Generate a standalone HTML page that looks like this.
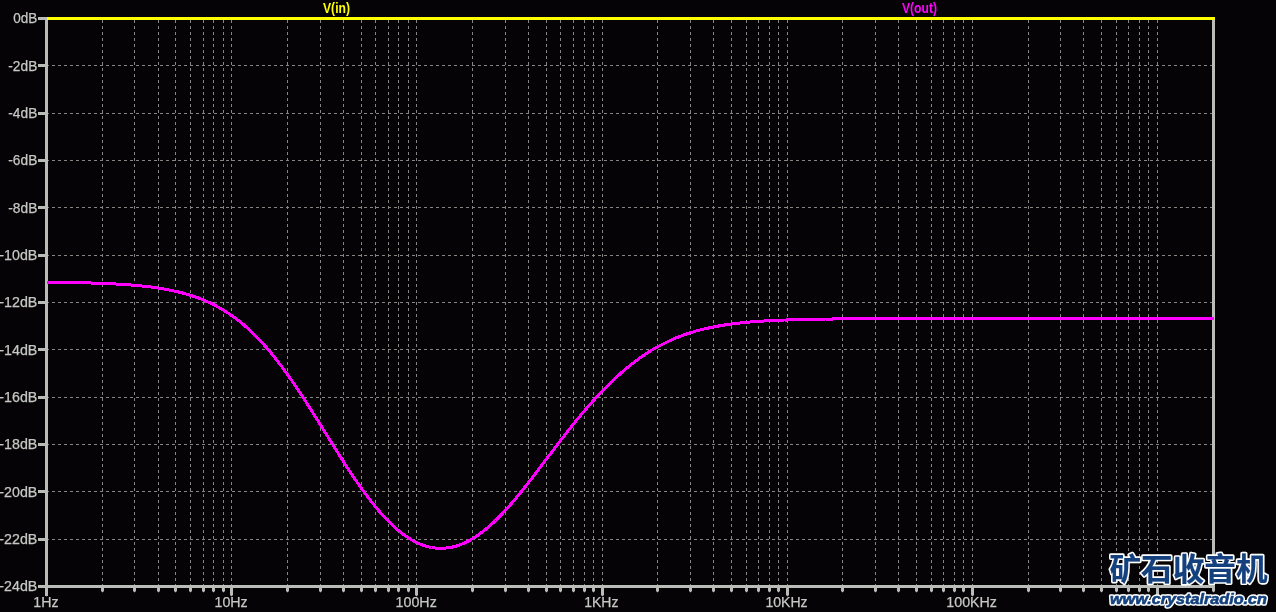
<!DOCTYPE html>
<html lang="zh"><head><meta charset="utf-8"><title>V(in) V(out)</title>
<style>html,body{margin:0;padding:0;background:#050305;overflow:hidden}svg{display:block;will-change:transform}</style></head>
<body>
<svg width="1276" height="612" viewBox="0 0 1276 612">
<rect width="1276" height="612" fill="#050305"/>
<g stroke="#848682" stroke-width="1" stroke-dasharray="3 3" shape-rendering="crispEdges" fill="none">
<path d="M102.5 20.0V585.5"/>
<path d="M134.5 20.0V585.5"/>
<path d="M158.5 20.0V585.5"/>
<path d="M175.5 20.0V585.5"/>
<path d="M190.5 20.0V585.5"/>
<path d="M203.5 20.0V585.5"/>
<path d="M213.5 20.0V585.5"/>
<path d="M223.5 20.0V585.5"/>
<path d="M231.5 20.0V585.5"/>
<path d="M287.5 20.0V585.5"/>
<path d="M320.5 20.0V585.5"/>
<path d="M343.5 20.0V585.5"/>
<path d="M361.5 20.0V585.5"/>
<path d="M375.5 20.0V585.5"/>
<path d="M388.5 20.0V585.5"/>
<path d="M398.5 20.0V585.5"/>
<path d="M408.5 20.0V585.5"/>
<path d="M416.5 20.0V585.5"/>
<path d="M472.5 20.0V585.5"/>
<path d="M505.5 20.0V585.5"/>
<path d="M528.5 20.0V585.5"/>
<path d="M546.5 20.0V585.5"/>
<path d="M560.5 20.0V585.5"/>
<path d="M573.5 20.0V585.5"/>
<path d="M584.5 20.0V585.5"/>
<path d="M593.5 20.0V585.5"/>
<path d="M602.5 20.0V585.5"/>
<path d="M657.5 20.0V585.5"/>
<path d="M690.5 20.0V585.5"/>
<path d="M713.5 20.0V585.5"/>
<path d="M731.5 20.0V585.5"/>
<path d="M746.5 20.0V585.5"/>
<path d="M758.5 20.0V585.5"/>
<path d="M769.5 20.0V585.5"/>
<path d="M778.5 20.0V585.5"/>
<path d="M787.5 20.0V585.5"/>
<path d="M842.5 20.0V585.5"/>
<path d="M875.5 20.0V585.5"/>
<path d="M898.5 20.0V585.5"/>
<path d="M916.5 20.0V585.5"/>
<path d="M931.5 20.0V585.5"/>
<path d="M943.5 20.0V585.5"/>
<path d="M954.5 20.0V585.5"/>
<path d="M963.5 20.0V585.5"/>
<path d="M972.5 20.0V585.5"/>
<path d="M1028.5 20.0V585.5"/>
<path d="M1060.5 20.0V585.5"/>
<path d="M1083.5 20.0V585.5"/>
<path d="M1101.5 20.0V585.5"/>
<path d="M1116.5 20.0V585.5"/>
<path d="M1128.5 20.0V585.5"/>
<path d="M1139.5 20.0V585.5"/>
<path d="M1148.5 20.0V585.5"/>
<path d="M1157.5 20.0V585.5"/>
<path d="M46 65.5H1212.5"/>
<path d="M46 113.5H1212.5"/>
<path d="M46 160.5H1212.5"/>
<path d="M46 207.5H1212.5"/>
<path d="M46 255.5H1212.5"/>
<path d="M46 302.5H1212.5"/>
<path d="M46 349.5H1212.5"/>
<path d="M46 397.5H1212.5"/>
<path d="M46 444.5H1212.5"/>
<path d="M46 491.5H1212.5"/>
<path d="M46 539.5H1212.5"/>
</g>
<g fill="#babcb8" shape-rendering="crispEdges">
<rect x="45" y="17" width="3" height="579"/>
<rect x="45" y="585" width="1170" height="3"/>
<rect x="1212" y="17" width="3" height="571"/>
<rect x="45" y="17" width="1170" height="3"/>
<rect x="38" y="17" width="8" height="3"/>
<rect x="38" y="64" width="8" height="3"/>
<rect x="38" y="112" width="8" height="3"/>
<rect x="38" y="159" width="8" height="3"/>
<rect x="38" y="206" width="8" height="3"/>
<rect x="38" y="254" width="8" height="3"/>
<rect x="38" y="301" width="8" height="3"/>
<rect x="38" y="348" width="8" height="3"/>
<rect x="38" y="396" width="8" height="3"/>
<rect x="38" y="443" width="8" height="3"/>
<rect x="38" y="490" width="8" height="3"/>
<rect x="38" y="538" width="8" height="3"/>
<rect x="38" y="585" width="8" height="3"/>
</g>
<g fill="#babcb8">
<path d="M101.0 587V591L102.5 592.5L104.0 591V587Z"/>
<path d="M133.0 587V591L134.5 592.5L136.0 591V587Z"/>
<path d="M157.0 587V591L158.5 592.5L160.0 591V587Z"/>
<path d="M174.0 587V591L175.5 592.5L177.0 591V587Z"/>
<path d="M189.0 587V591L190.5 592.5L192.0 591V587Z"/>
<path d="M202.0 587V591L203.5 592.5L205.0 591V587Z"/>
<path d="M212.0 587V591L213.5 592.5L215.0 591V587Z"/>
<path d="M222.0 587V591L223.5 592.5L225.0 591V587Z"/>
<path d="M230.0 587V595L231.5 596.5L233.0 595V587Z"/>
<path d="M286.0 587V591L287.5 592.5L289.0 591V587Z"/>
<path d="M319.0 587V591L320.5 592.5L322.0 591V587Z"/>
<path d="M342.0 587V591L343.5 592.5L345.0 591V587Z"/>
<path d="M360.0 587V591L361.5 592.5L363.0 591V587Z"/>
<path d="M374.0 587V591L375.5 592.5L377.0 591V587Z"/>
<path d="M387.0 587V591L388.5 592.5L390.0 591V587Z"/>
<path d="M397.0 587V591L398.5 592.5L400.0 591V587Z"/>
<path d="M407.0 587V591L408.5 592.5L410.0 591V587Z"/>
<path d="M415.0 587V595L416.5 596.5L418.0 595V587Z"/>
<path d="M471.0 587V591L472.5 592.5L474.0 591V587Z"/>
<path d="M504.0 587V591L505.5 592.5L507.0 591V587Z"/>
<path d="M527.0 587V591L528.5 592.5L530.0 591V587Z"/>
<path d="M545.0 587V591L546.5 592.5L548.0 591V587Z"/>
<path d="M559.0 587V591L560.5 592.5L562.0 591V587Z"/>
<path d="M572.0 587V591L573.5 592.5L575.0 591V587Z"/>
<path d="M583.0 587V591L584.5 592.5L586.0 591V587Z"/>
<path d="M592.0 587V591L593.5 592.5L595.0 591V587Z"/>
<path d="M601.0 587V595L602.5 596.5L604.0 595V587Z"/>
<path d="M656.0 587V591L657.5 592.5L659.0 591V587Z"/>
<path d="M689.0 587V591L690.5 592.5L692.0 591V587Z"/>
<path d="M712.0 587V591L713.5 592.5L715.0 591V587Z"/>
<path d="M730.0 587V591L731.5 592.5L733.0 591V587Z"/>
<path d="M745.0 587V591L746.5 592.5L748.0 591V587Z"/>
<path d="M757.0 587V591L758.5 592.5L760.0 591V587Z"/>
<path d="M768.0 587V591L769.5 592.5L771.0 591V587Z"/>
<path d="M777.0 587V591L778.5 592.5L780.0 591V587Z"/>
<path d="M786.0 587V595L787.5 596.5L789.0 595V587Z"/>
<path d="M841.0 587V591L842.5 592.5L844.0 591V587Z"/>
<path d="M874.0 587V591L875.5 592.5L877.0 591V587Z"/>
<path d="M897.0 587V591L898.5 592.5L900.0 591V587Z"/>
<path d="M915.0 587V591L916.5 592.5L918.0 591V587Z"/>
<path d="M930.0 587V591L931.5 592.5L933.0 591V587Z"/>
<path d="M942.0 587V591L943.5 592.5L945.0 591V587Z"/>
<path d="M953.0 587V591L954.5 592.5L956.0 591V587Z"/>
<path d="M962.0 587V591L963.5 592.5L965.0 591V587Z"/>
<path d="M971.0 587V595L972.5 596.5L974.0 595V587Z"/>
<path d="M1027.0 587V591L1028.5 592.5L1030.0 591V587Z"/>
<path d="M1059.0 587V591L1060.5 592.5L1062.0 591V587Z"/>
<path d="M1082.0 587V591L1083.5 592.5L1085.0 591V587Z"/>
<path d="M1100.0 587V591L1101.5 592.5L1103.0 591V587Z"/>
<path d="M1115.0 587V591L1116.5 592.5L1118.0 591V587Z"/>
<path d="M1127.0 587V591L1128.5 592.5L1130.0 591V587Z"/>
<path d="M1138.0 587V591L1139.5 592.5L1141.0 591V587Z"/>
<path d="M1147.0 587V591L1148.5 592.5L1150.0 591V587Z"/>
<path d="M1156.0 587V595L1157.5 596.5L1159.0 595V587Z"/>
<path d="M1212.0 587V591L1213.5 592.5L1215.0 591V587Z"/>
<path d="M45 595L46.5 596.5L48 595Z"/>
</g>
<g font-family="Liberation Sans, Arial, sans-serif" font-size="14.5" fill="#c6c8c4" stroke="#c6c8c4" stroke-width="0.25">
<text x="13.3" y="23.4" textLength="24" lengthAdjust="spacingAndGlyphs">0dB</text>
<text x="8.3" y="70.7" textLength="29" lengthAdjust="spacingAndGlyphs">-2dB</text>
<text x="8.3" y="118.1" textLength="29" lengthAdjust="spacingAndGlyphs">-4dB</text>
<text x="8.3" y="165.4" textLength="29" lengthAdjust="spacingAndGlyphs">-6dB</text>
<text x="8.3" y="212.7" textLength="29" lengthAdjust="spacingAndGlyphs">-8dB</text>
<text x="-0.7" y="260.1" textLength="38" lengthAdjust="spacingAndGlyphs">-10dB</text>
<text x="-0.7" y="307.4" textLength="38" lengthAdjust="spacingAndGlyphs">-12dB</text>
<text x="-0.7" y="354.7" textLength="38" lengthAdjust="spacingAndGlyphs">-14dB</text>
<text x="-0.7" y="402.1" textLength="38" lengthAdjust="spacingAndGlyphs">-16dB</text>
<text x="-0.7" y="449.4" textLength="38" lengthAdjust="spacingAndGlyphs">-18dB</text>
<text x="-0.7" y="496.7" textLength="38" lengthAdjust="spacingAndGlyphs">-20dB</text>
<text x="-0.7" y="544.1" textLength="38" lengthAdjust="spacingAndGlyphs">-22dB</text>
<text x="-0.7" y="591.4" textLength="38" lengthAdjust="spacingAndGlyphs">-24dB</text>
<text x="33.3" y="607" textLength="25.2" lengthAdjust="spacingAndGlyphs">1Hz</text>
<text x="214.5" y="607" textLength="33.2" lengthAdjust="spacingAndGlyphs">10Hz</text>
<text x="395.6" y="607" textLength="41.2" lengthAdjust="spacingAndGlyphs">100Hz</text>
<text x="584.2" y="607" textLength="34.2" lengthAdjust="spacingAndGlyphs">1KHz</text>
<text x="765.4" y="607" textLength="42.2" lengthAdjust="spacingAndGlyphs">10KHz</text>
<text x="946.3" y="607" textLength="50.7" lengthAdjust="spacingAndGlyphs">100KHz</text>
</g>
<path d="M47 18.5H1215" stroke="#ffff00" stroke-width="3" fill="none" shape-rendering="crispEdges"/>
<polyline points="46.5,282.2 47.5,282.2 48.5,282.2 49.5,282.2 50.5,282.2 51.5,282.2 52.5,282.2 53.5,282.2 54.5,282.2 55.5,282.3 56.5,282.3 57.5,282.3 58.5,282.3 59.5,282.3 60.5,282.3 61.5,282.3 62.5,282.4 63.5,282.4 64.5,282.4 65.5,282.4 66.5,282.4 67.5,282.4 68.5,282.5 69.5,282.5 70.5,282.5 71.5,282.5 72.5,282.5 73.5,282.5 74.5,282.6 75.5,282.6 76.5,282.6 77.5,282.6 78.5,282.7 79.5,282.7 80.5,282.7 81.5,282.7 82.5,282.7 83.5,282.8 84.5,282.8 85.5,282.8 86.5,282.8 87.5,282.9 88.5,282.9 89.5,282.9 90.5,283.0 91.5,283.0 92.5,283.0 93.5,283.1 94.5,283.1 95.5,283.1 96.5,283.2 97.5,283.2 98.5,283.2 99.5,283.3 100.5,283.3 101.5,283.3 102.5,283.4 103.5,283.4 104.5,283.5 105.5,283.5 106.5,283.5 107.5,283.6 108.5,283.6 109.5,283.7 110.5,283.7 111.5,283.8 112.5,283.8 113.5,283.9 114.5,283.9 115.5,284.0 116.5,284.0 117.5,284.1 118.5,284.2 119.5,284.2 120.5,284.3 121.5,284.3 122.5,284.4 123.5,284.5 124.5,284.5 125.5,284.6 126.5,284.7 127.5,284.8 128.5,284.8 129.5,284.9 130.5,285.0 131.5,285.1 132.5,285.1 133.5,285.2 134.5,285.3 135.5,285.4 136.5,285.5 137.5,285.6 138.5,285.7 139.5,285.8 140.5,285.9 141.5,286.0 142.5,286.1 143.5,286.2 144.5,286.3 145.5,286.4 146.5,286.5 147.5,286.6 148.5,286.8 149.5,286.9 150.5,287.0 151.5,287.1 152.5,287.3 153.5,287.4 154.5,287.5 155.5,287.7 156.5,287.8 157.5,288.0 158.5,288.1 159.5,288.3 160.5,288.4 161.5,288.6 162.5,288.8 163.5,288.9 164.5,289.1 165.5,289.3 166.5,289.5 167.5,289.7 168.5,289.9 169.5,290.1 170.5,290.3 171.5,290.5 172.5,290.7 173.5,290.9 174.5,291.1 175.5,291.3 176.5,291.6 177.5,291.8 178.5,292.0 179.5,292.3 180.5,292.5 181.5,292.8 182.5,293.0 183.5,293.3 184.5,293.6 185.5,293.9 186.5,294.1 187.5,294.4 188.5,294.7 189.5,295.0 190.5,295.3 191.5,295.7 192.5,296.0 193.5,296.3 194.5,296.7 195.5,297.0 196.5,297.4 197.5,297.7 198.5,298.1 199.5,298.5 200.5,298.8 201.5,299.2 202.5,299.6 203.5,300.0 204.5,300.5 205.5,300.9 206.5,301.3 207.5,301.8 208.5,302.2 209.5,302.7 210.5,303.1 211.5,303.6 212.5,304.1 213.5,304.6 214.5,305.1 215.5,305.6 216.5,306.2 217.5,306.7 218.5,307.3 219.5,307.8 220.5,308.4 221.5,309.0 222.5,309.5 223.5,310.1 224.5,310.8 225.5,311.4 226.5,312.0 227.5,312.7 228.5,313.3 229.5,314.0 230.5,314.7 231.5,315.4 232.5,316.1 233.5,316.8 234.5,317.5 235.5,318.3 236.5,319.0 237.5,319.8 238.5,320.6 239.5,321.3 240.5,322.1 241.5,323.0 242.5,323.8 243.5,324.6 244.5,325.5 245.5,326.4 246.5,327.2 247.5,328.1 248.5,329.0 249.5,330.0 250.5,330.9 251.5,331.8 252.5,332.8 253.5,333.8 254.5,334.8 255.5,335.8 256.5,336.8 257.5,337.8 258.5,338.8 259.5,339.9 260.5,341.0 261.5,342.0 262.5,343.1 263.5,344.2 264.5,345.4 265.5,346.5 266.5,347.6 267.5,348.8 268.5,350.0 269.5,351.1 270.5,352.3 271.5,353.6 272.5,354.8 273.5,356.0 274.5,357.3 275.5,358.5 276.5,359.8 277.5,361.1 278.5,362.4 279.5,363.7 280.5,365.0 281.5,366.3 282.5,367.7 283.5,369.0 284.5,370.4 285.5,371.8 286.5,373.1 287.5,374.5 288.5,375.9 289.5,377.4 290.5,378.8 291.5,380.2 292.5,381.7 293.5,383.1 294.5,384.6 295.5,386.1 296.5,387.5 297.5,389.0 298.5,390.5 299.5,392.0 300.5,393.5 301.5,395.1 302.5,396.6 303.5,398.1 304.5,399.7 305.5,401.2 306.5,402.7 307.5,404.3 308.5,405.9 309.5,407.4 310.5,409.0 311.5,410.6 312.5,412.2 313.5,413.8 314.5,415.3 315.5,416.9 316.5,418.5 317.5,420.1 318.5,421.7 319.5,423.3 320.5,424.9 321.5,426.6 322.5,428.2 323.5,429.8 324.5,431.4 325.5,433.0 326.5,434.6 327.5,436.2 328.5,437.8 329.5,439.4 330.5,441.0 331.5,442.6 332.5,444.2 333.5,445.8 334.5,447.4 335.5,449.0 336.5,450.6 337.5,452.2 338.5,453.8 339.5,455.4 340.5,456.9 341.5,458.5 342.5,460.1 343.5,461.6 344.5,463.2 345.5,464.7 346.5,466.3 347.5,467.8 348.5,469.3 349.5,470.9 350.5,472.4 351.5,473.9 352.5,475.4 353.5,476.9 354.5,478.3 355.5,479.8 356.5,481.3 357.5,482.7 358.5,484.1 359.5,485.6 360.5,487.0 361.5,488.4 362.5,489.8 363.5,491.2 364.5,492.5 365.5,493.9 366.5,495.3 367.5,496.6 368.5,497.9 369.5,499.2 370.5,500.5 371.5,501.8 372.5,503.1 373.5,504.3 374.5,505.6 375.5,506.8 376.5,508.0 377.5,509.2 378.5,510.4 379.5,511.5 380.5,512.7 381.5,513.8 382.5,514.9 383.5,516.0 384.5,517.1 385.5,518.2 386.5,519.2 387.5,520.3 388.5,521.3 389.5,522.3 390.5,523.3 391.5,524.3 392.5,525.2 393.5,526.1 394.5,527.1 395.5,527.9 396.5,528.8 397.5,529.7 398.5,530.5 399.5,531.3 400.5,532.2 401.5,532.9 402.5,533.7 403.5,534.4 404.5,535.2 405.5,535.9 406.5,536.6 407.5,537.2 408.5,537.9 409.5,538.5 410.5,539.1 411.5,539.7 412.5,540.3 413.5,540.9 414.5,541.4 415.5,541.9 416.5,542.4 417.5,542.9 418.5,543.3 419.5,543.8 420.5,544.2 421.5,544.6 422.5,545.0 423.5,545.3 424.5,545.7 425.5,546.0 426.5,546.3 427.5,546.6 428.5,546.8 429.5,547.1 430.5,547.3 431.5,547.5 432.5,547.6 433.5,547.8 434.5,547.9 435.5,548.1 436.5,548.2 437.5,548.2 438.5,548.3 439.5,548.3 440.5,548.3 441.5,548.3 442.5,548.3 443.5,548.3 444.5,548.2 445.5,548.1 446.5,548.0 447.5,547.9 448.5,547.8 449.5,547.6 450.5,547.4 451.5,547.2 452.5,547.0 453.5,546.8 454.5,546.5 455.5,546.3 456.5,546.0 457.5,545.6 458.5,545.3 459.5,545.0 460.5,544.6 461.5,544.2 462.5,543.8 463.5,543.4 464.5,542.9 465.5,542.4 466.5,542.0 467.5,541.5 468.5,540.9 469.5,540.4 470.5,539.8 471.5,539.3 472.5,538.7 473.5,538.1 474.5,537.4 475.5,536.8 476.5,536.1 477.5,535.5 478.5,534.8 479.5,534.0 480.5,533.3 481.5,532.6 482.5,531.8 483.5,531.0 484.5,530.2 485.5,529.4 486.5,528.6 487.5,527.7 488.5,526.9 489.5,526.0 490.5,525.1 491.5,524.2 492.5,523.3 493.5,522.4 494.5,521.4 495.5,520.5 496.5,519.5 497.5,518.5 498.5,517.5 499.5,516.5 500.5,515.5 501.5,514.4 502.5,513.4 503.5,512.3 504.5,511.2 505.5,510.1 506.5,509.0 507.5,507.9 508.5,506.8 509.5,505.7 510.5,504.5 511.5,503.4 512.5,502.2 513.5,501.0 514.5,499.9 515.5,498.7 516.5,497.5 517.5,496.3 518.5,495.1 519.5,493.8 520.5,492.6 521.5,491.4 522.5,490.1 523.5,488.9 524.5,487.6 525.5,486.4 526.5,485.1 527.5,483.8 528.5,482.5 529.5,481.2 530.5,480.0 531.5,478.7 532.5,477.4 533.5,476.1 534.5,474.8 535.5,473.5 536.5,472.1 537.5,470.8 538.5,469.5 539.5,468.2 540.5,466.9 541.5,465.6 542.5,464.2 543.5,462.9 544.5,461.6 545.5,460.3 546.5,459.0 547.5,457.6 548.5,456.3 549.5,455.0 550.5,453.7 551.5,452.4 552.5,451.0 553.5,449.7 554.5,448.4 555.5,447.1 556.5,445.8 557.5,444.5 558.5,443.2 559.5,441.9 560.5,440.6 561.5,439.3 562.5,438.0 563.5,436.7 564.5,435.4 565.5,434.1 566.5,432.8 567.5,431.6 568.5,430.3 569.5,429.0 570.5,427.8 571.5,426.5 572.5,425.3 573.5,424.0 574.5,422.8 575.5,421.6 576.5,420.3 577.5,419.1 578.5,417.9 579.5,416.7 580.5,415.5 581.5,414.3 582.5,413.1 583.5,411.9 584.5,410.8 585.5,409.6 586.5,408.4 587.5,407.3 588.5,406.1 589.5,405.0 590.5,403.8 591.5,402.7 592.5,401.6 593.5,400.5 594.5,399.4 595.5,398.3 596.5,397.2 597.5,396.1 598.5,395.0 599.5,394.0 600.5,392.9 601.5,391.9 602.5,390.8 603.5,389.8 604.5,388.8 605.5,387.7 606.5,386.7 607.5,385.7 608.5,384.7 609.5,383.8 610.5,382.8 611.5,381.8 612.5,380.9 613.5,379.9 614.5,379.0 615.5,378.0 616.5,377.1 617.5,376.2 618.5,375.3 619.5,374.4 620.5,373.5 621.5,372.6 622.5,371.7 623.5,370.9 624.5,370.0 625.5,369.2 626.5,368.3 627.5,367.5 628.5,366.7 629.5,365.9 630.5,365.1 631.5,364.3 632.5,363.5 633.5,362.7 634.5,362.0 635.5,361.2 636.5,360.5 637.5,359.7 638.5,359.0 639.5,358.3 640.5,357.6 641.5,356.9 642.5,356.2 643.5,355.5 644.5,354.8 645.5,354.1 646.5,353.5 647.5,352.8 648.5,352.2 649.5,351.6 650.5,351.0 651.5,350.3 652.5,349.7 653.5,349.1 654.5,348.6 655.5,348.0 656.5,347.4 657.5,346.8 658.5,346.3 659.5,345.7 660.5,345.2 661.5,344.7 662.5,344.2 663.5,343.7 664.5,343.2 665.5,342.7 666.5,342.2 667.5,341.7 668.5,341.2 669.5,340.8 670.5,340.3 671.5,339.9 672.5,339.4 673.5,339.0 674.5,338.6 675.5,338.1 676.5,337.7 677.5,337.3 678.5,336.9 679.5,336.5 680.5,336.2 681.5,335.8 682.5,335.4 683.5,335.1 684.5,334.7 685.5,334.3 686.5,334.0 687.5,333.7 688.5,333.3 689.5,333.0 690.5,332.7 691.5,332.4 692.5,332.1 693.5,331.8 694.5,331.5 695.5,331.2 696.5,330.9 697.5,330.7 698.5,330.4 699.5,330.1 700.5,329.9 701.5,329.6 702.5,329.4 703.5,329.1 704.5,328.9 705.5,328.6 706.5,328.4 707.5,328.2 708.5,328.0 709.5,327.8 710.5,327.5 711.5,327.3 712.5,327.1 713.5,326.9 714.5,326.7 715.5,326.6 716.5,326.4 717.5,326.2 718.5,326.0 719.5,325.8 720.5,325.7 721.5,325.5 722.5,325.3 723.5,325.2 724.5,325.0 725.5,324.9 726.5,324.7 727.5,324.6 728.5,324.4 729.5,324.3 730.5,324.2 731.5,324.0 732.5,323.9 733.5,323.8 734.5,323.6 735.5,323.5 736.5,323.4 737.5,323.3 738.5,323.2 739.5,323.1 740.5,323.0 741.5,322.9 742.5,322.8 743.5,322.6 744.5,322.6 745.5,322.5 746.5,322.4 747.5,322.3 748.5,322.2 749.5,322.1 750.5,322.0 751.5,321.9 752.5,321.8 753.5,321.8 754.5,321.7 755.5,321.6 756.5,321.5 757.5,321.5 758.5,321.4 759.5,321.3 760.5,321.2 761.5,321.2 762.5,321.1 763.5,321.1 764.5,321.0 765.5,320.9 766.5,320.9 767.5,320.8 768.5,320.8 769.5,320.7 770.5,320.7 771.5,320.6 772.5,320.5 773.5,320.5 774.5,320.5 775.5,320.4 776.5,320.4 777.5,320.3 778.5,320.3 779.5,320.2 780.5,320.2 781.5,320.1 782.5,320.1 783.5,320.1 784.5,320.0 785.5,320.0 786.5,320.0 787.5,319.9 788.5,319.9 789.5,319.8 790.5,319.8 791.5,319.8 792.5,319.8 793.5,319.7 794.5,319.7 795.5,319.7 796.5,319.6 797.5,319.6 798.5,319.6 799.5,319.6 800.5,319.5 801.5,319.5 802.5,319.5 803.5,319.5 804.5,319.4 805.5,319.4 806.5,319.4 807.5,319.4 808.5,319.3 809.5,319.3 810.5,319.3 811.5,319.3 812.5,319.3 813.5,319.2 814.5,319.2 815.5,319.2 816.5,319.2 817.5,319.2 818.5,319.2 819.5,319.1 820.5,319.1 821.5,319.1 822.5,319.1 823.5,319.1 824.5,319.1 825.5,319.0 826.5,319.0 827.5,319.0 828.5,319.0 829.5,319.0 830.5,319.0 831.5,319.0 832.5,319.0 833.5,318.9 834.5,318.9 835.5,318.9 836.5,318.9 837.5,318.9 838.5,318.9 839.5,318.9 840.5,318.9 841.5,318.9 842.5,318.9 843.5,318.8 844.5,318.8 845.5,318.8 846.5,318.8 847.5,318.8 848.5,318.8 849.5,318.8 850.5,318.8 851.5,318.8 852.5,318.8 853.5,318.8 854.5,318.8 855.5,318.8 856.5,318.8 857.5,318.7 858.5,318.7 859.5,318.7 860.5,318.7 861.5,318.7 862.5,318.7 863.5,318.7 864.5,318.7 865.5,318.7 866.5,318.7 867.5,318.7 868.5,318.7 869.5,318.7 870.5,318.7 871.5,318.7 872.5,318.7 873.5,318.7 874.5,318.7 875.5,318.7 876.5,318.6 877.5,318.6 878.5,318.6 879.5,318.6 880.5,318.6 881.5,318.6 882.5,318.6 883.5,318.6 884.5,318.6 885.5,318.6 886.5,318.6 887.5,318.6 888.5,318.6 889.5,318.6 890.5,318.6 891.5,318.6 892.5,318.6 893.5,318.6 894.5,318.6 895.5,318.6 896.5,318.6 897.5,318.6 898.5,318.6 899.5,318.6 900.5,318.6 901.5,318.6 902.5,318.6 903.5,318.6 904.5,318.6 905.5,318.6 906.5,318.6 907.5,318.6 908.5,318.6 909.5,318.6 910.5,318.6 911.5,318.6 912.5,318.6 913.5,318.6 914.5,318.6 915.5,318.6 916.5,318.5 917.5,318.5 918.5,318.5 919.5,318.5 920.5,318.5 921.5,318.5 922.5,318.5 923.5,318.5 924.5,318.5 925.5,318.5 926.5,318.5 927.5,318.5 928.5,318.5 929.5,318.5 930.5,318.5 931.5,318.5 932.5,318.5 933.5,318.5 934.5,318.5 935.5,318.5 936.5,318.5 937.5,318.5 938.5,318.5 939.5,318.5 940.5,318.5 941.5,318.5 942.5,318.5 943.5,318.5 944.5,318.5 945.5,318.5 946.5,318.5 947.5,318.5 948.5,318.5 949.5,318.5 950.5,318.5 951.5,318.5 952.5,318.5 953.5,318.5 954.5,318.5 955.5,318.5 956.5,318.5 957.5,318.5 958.5,318.5 959.5,318.5 960.5,318.5 961.5,318.5 962.5,318.5 963.5,318.5 964.5,318.5 965.5,318.5 966.5,318.5 967.5,318.5 968.5,318.5 969.5,318.5 970.5,318.5 971.5,318.5 972.5,318.5 973.5,318.5 974.5,318.5 975.5,318.5 976.5,318.5 977.5,318.5 978.5,318.5 979.5,318.5 980.5,318.5 981.5,318.5 982.5,318.5 983.5,318.5 984.5,318.5 985.5,318.5 986.5,318.5 987.5,318.5 988.5,318.5 989.5,318.5 990.5,318.5 991.5,318.5 992.5,318.5 993.5,318.5 994.5,318.5 995.5,318.5 996.5,318.5 997.5,318.5 998.5,318.5 999.5,318.5 1000.5,318.5 1001.5,318.5 1002.5,318.5 1003.5,318.5 1004.5,318.5 1005.5,318.5 1006.5,318.5 1007.5,318.5 1008.5,318.5 1009.5,318.5 1010.5,318.5 1011.5,318.5 1012.5,318.5 1013.5,318.5 1014.5,318.5 1015.5,318.5 1016.5,318.5 1017.5,318.5 1018.5,318.5 1019.5,318.5 1020.5,318.5 1021.5,318.5 1022.5,318.5 1023.5,318.5 1024.5,318.5 1025.5,318.5 1026.5,318.5 1027.5,318.5 1028.5,318.5 1029.5,318.5 1030.5,318.5 1031.5,318.5 1032.5,318.5 1033.5,318.5 1034.5,318.5 1035.5,318.5 1036.5,318.5 1037.5,318.5 1038.5,318.5 1039.5,318.5 1040.5,318.5 1041.5,318.5 1042.5,318.5 1043.5,318.5 1044.5,318.5 1045.5,318.5 1046.5,318.5 1047.5,318.5 1048.5,318.5 1049.5,318.5 1050.5,318.5 1051.5,318.5 1052.5,318.5 1053.5,318.5 1054.5,318.5 1055.5,318.5 1056.5,318.5 1057.5,318.5 1058.5,318.5 1059.5,318.5 1060.5,318.5 1061.5,318.5 1062.5,318.5 1063.5,318.5 1064.5,318.5 1065.5,318.5 1066.5,318.5 1067.5,318.5 1068.5,318.5 1069.5,318.5 1070.5,318.5 1071.5,318.5 1072.5,318.5 1073.5,318.5 1074.5,318.5 1075.5,318.5 1076.5,318.5 1077.5,318.5 1078.5,318.5 1079.5,318.5 1080.5,318.5 1081.5,318.5 1082.5,318.5 1083.5,318.5 1084.5,318.5 1085.5,318.5 1086.5,318.5 1087.5,318.5 1088.5,318.5 1089.5,318.5 1090.5,318.5 1091.5,318.5 1092.5,318.5 1093.5,318.5 1094.5,318.5 1095.5,318.5 1096.5,318.5 1097.5,318.5 1098.5,318.5 1099.5,318.5 1100.5,318.5 1101.5,318.5 1102.5,318.5 1103.5,318.5 1104.5,318.5 1105.5,318.5 1106.5,318.5 1107.5,318.5 1108.5,318.5 1109.5,318.5 1110.5,318.5 1111.5,318.5 1112.5,318.5 1113.5,318.5 1114.5,318.5 1115.5,318.5 1116.5,318.5 1117.5,318.5 1118.5,318.5 1119.5,318.5 1120.5,318.5 1121.5,318.5 1122.5,318.5 1123.5,318.5 1124.5,318.5 1125.5,318.5 1126.5,318.5 1127.5,318.5 1128.5,318.5 1129.5,318.5 1130.5,318.5 1131.5,318.5 1132.5,318.5 1133.5,318.5 1134.5,318.5 1135.5,318.5 1136.5,318.5 1137.5,318.5 1138.5,318.5 1139.5,318.5 1140.5,318.5 1141.5,318.5 1142.5,318.5 1143.5,318.5 1144.5,318.5 1145.5,318.5 1146.5,318.5 1147.5,318.5 1148.5,318.5 1149.5,318.5 1150.5,318.5 1151.5,318.5 1152.5,318.5 1153.5,318.5 1154.5,318.5 1155.5,318.5 1156.5,318.5 1157.5,318.5 1158.5,318.5 1159.5,318.5 1160.5,318.5 1161.5,318.5 1162.5,318.5 1163.5,318.5 1164.5,318.5 1165.5,318.5 1166.5,318.5 1167.5,318.5 1168.5,318.5 1169.5,318.5 1170.5,318.5 1171.5,318.5 1172.5,318.5 1173.5,318.5 1174.5,318.5 1175.5,318.5 1176.5,318.5 1177.5,318.5 1178.5,318.5 1179.5,318.5 1180.5,318.5 1181.5,318.5 1182.5,318.5 1183.5,318.5 1184.5,318.5 1185.5,318.5 1186.5,318.5 1187.5,318.5 1188.5,318.5 1189.5,318.5 1190.5,318.5 1191.5,318.5 1192.5,318.5 1193.5,318.5 1194.5,318.5 1195.5,318.5 1196.5,318.5 1197.5,318.5 1198.5,318.5 1199.5,318.5 1200.5,318.5 1201.5,318.5 1202.5,318.5 1203.5,318.5 1204.5,318.5 1205.5,318.5 1206.5,318.5 1207.5,318.5 1208.5,318.5 1209.5,318.5 1210.5,318.5 1211.5,318.5 1212.5,318.5 1213.5,318.5" stroke="#ff00ff" stroke-width="3" fill="none" stroke-linejoin="bevel" shape-rendering="crispEdges"/>
<g font-family="Liberation Sans, Arial, sans-serif" font-size="14.5" font-weight="bold">
<text x="323" y="13" textLength="27" lengthAdjust="spacingAndGlyphs" fill="#ffff00">V(in)</text>
<text x="902" y="13" textLength="35" lengthAdjust="spacingAndGlyphs" fill="#ff00ff">V(out)</text>
</g>
<g stroke="#ffffff" stroke-linejoin="round" fill="#ffffff">
<text x="1109.5" y="580" font-family="Liberation Sans, 'Noto Sans CJK SC', sans-serif" font-weight="bold" font-size="31" textLength="158" lengthAdjust="spacingAndGlyphs" stroke-width="3.4">矿石收音机</text>
<text x="1110" y="604" font-family="Liberation Sans, Arial, sans-serif" font-weight="bold" font-style="italic" font-size="14.5" textLength="157" lengthAdjust="spacingAndGlyphs" stroke-width="3.4">www.crystalradio.cn</text>
</g>
<g fill="#14417e" stroke="#14417e" stroke-linejoin="round">
<text x="1109.5" y="580" font-family="Liberation Sans, 'Noto Sans CJK SC', sans-serif" font-weight="bold" font-size="31" textLength="158" lengthAdjust="spacingAndGlyphs" stroke-width="0.2">矿石收音机</text>
<text x="1110" y="604" font-family="Liberation Sans, Arial, sans-serif" font-weight="bold" font-style="italic" font-size="14.5" textLength="157" lengthAdjust="spacingAndGlyphs" stroke-width="0.6">www.crystalradio.cn</text>
</g>
</svg>
</body></html>
